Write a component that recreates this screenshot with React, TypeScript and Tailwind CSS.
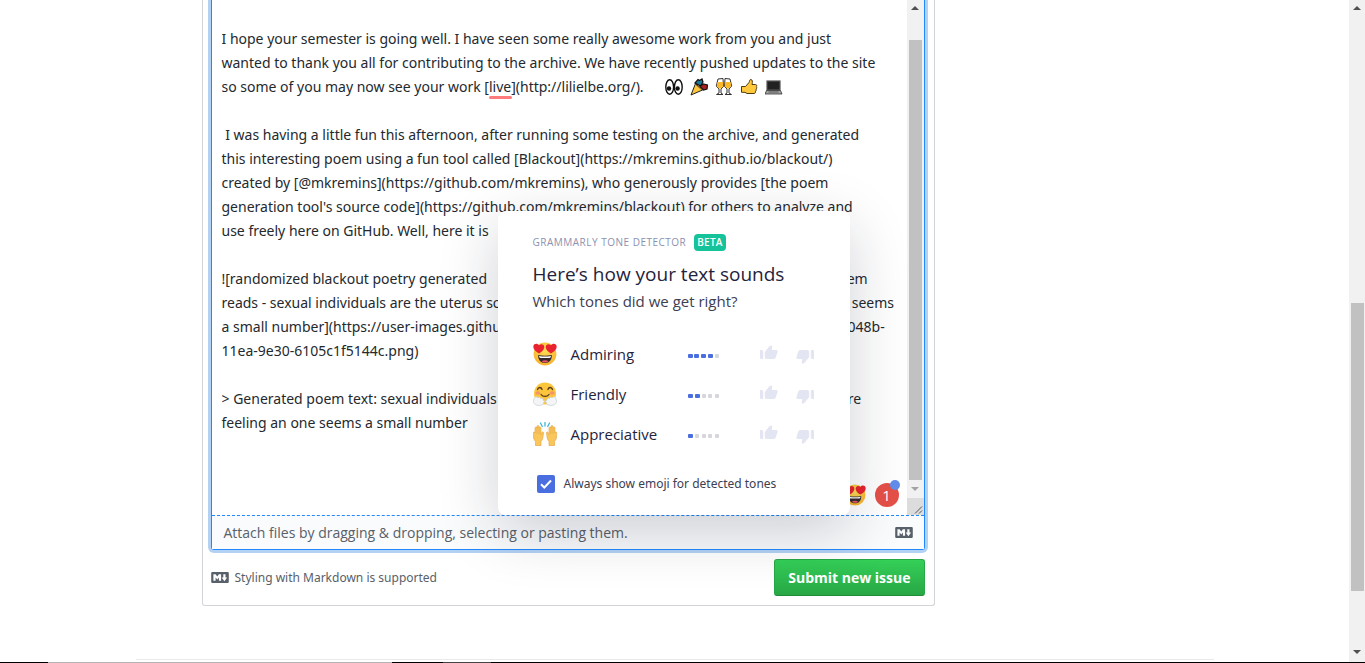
import React from "react";

const issueText = [
  "I hope your semester is going well. I have seen some really awesome work from you and just",
  "wanted to thank you all for contributing to the archive. We have recently pushed updates to the site",
  "so some of you may now see your work [live](http://lilielbe.org/).",
  "",
  " I was having a little fun this afternoon, after running some testing on the archive, and generated",
  "this interesting poem using a fun tool called [Blackout](https://mkremins.github.io/blackout/)",
  "created by [@mkremins](https://github.com/mkremins), who generously provides [the poem",
  "generation tool's source code](https://github.com/mkremins/blackout) for others to analyze and",
  "use freely here on GitHub. Well, here it is",
  "",
  "![randomized blackout poetry generated    from the text of one page held in the archive. The poem",
  "reads - sexual individuals are the uterus so  that there are so many of us who are feeling an one seems",
  "a small number](https://user-images.githubusercontent.com/10261170/69480212-a1b3c48012-048b-",
  "11ea-9e30-6105c1f5144c.png)",
  "",
  "> Generated poem text: sexual individuals are the uterus so  that there are so many of us who are",
  "feeling an one seems a small number",
].join("\n");

function HeartEyes({ className }: { className: string }) {
  return (
    <svg viewBox="0 0 24 24" className={className} aria-hidden="true">
      <defs>
        <radialGradient id="face" cx="50%" cy="35%" r="65%">
          <stop offset="0" stopColor="#fddc55" />
          <stop offset="1" stopColor="#f8b32c" />
        </radialGradient>
      </defs>
      <circle cx="12" cy="12" r="11.4" fill="url(#face)" />
      <path d="M5.2 13c4 .9 9.600.9 13.600 0 .3 4.600-2.400 8-6.800 8s-7.100-3.400-6.800-8z" fill="#33292f" />
      <path d="M6 13.900c3.900.8 8.100.8 12 0-.1 1.200-.7 2-1.700 2H7.700c-1 0-1.600-.8-1.700-2z" fill="#fff" />
      <path d="M8.500 19.300c2-1.500 5-1.500 7 0-2 1.700-5 1.700-7 0z" fill="#ea5562" />
      <path d="M6 11.400C2.600 9.600-.2 7.200.4 4 .9 1.200 4.600.8 6.100 3.300 8.300 1.200 11.700 2.500 11.200 5.600 10.800 8.500 8.500 10.200 6 11.400z" fill="#e8222e" />
      <path d="M18 11.400c3.400-1.800 6.200-4.200 5.600-7.400-.5-2.800-4.200-3.200-5.700-.7-2.200-2.100-5.600-.8-5.100 2.300.4 2.900 2.700 4.600 5.200 5.800z" fill="#e8222e" />
    </svg>
  );
}

function Hugging({ className }: { className: string }) {
  return (
    <svg viewBox="0 0 24 24" className={className} aria-hidden="true">
      <circle cx="12" cy="11.500" r="11" fill="#fbc63c" />
      <ellipse cx="4.800" cy="11" rx="2.500" ry="1.800" fill="#f5946b" />
      <ellipse cx="19.200" cy="11" rx="2.500" ry="1.800" fill="#f5946b" />
      <g fill="none" stroke="#573b20" strokeWidth="1.300" strokeLinecap="round">
        <path d="M4.500 7.500c.7-2.700 3.800-2.700 4.600 0M14.900 7.500c.8-2.700 3.900-2.700 4.600 0M8 12.500c1.800 2.600 6.200 2.600 8 0" />
      </g>
      <g fill="#f3f5f7" stroke="#c5cbd2" strokeWidth=".7">
        <path d="M1.500 16c1-2 3-1 3.300 0 1-1.500 2.800-.8 2.600.4 1.600-.6 3.400.3 2.500 1.700 2 .2 2 2 .6 2.500.4 2.400-3.700 3.300-6.300 2.700C1 22.700-.8 19.500 1.500 16z" />
        <path d="M22.500 16c-1-2-3-1-3.300 0-1-1.500-2.800-.8-2.600.4-1.600-.6-3.400.3-2.500 1.700-2 .2-2 2-.6 2.500-.4 2.400 3.700 3.300 6.300 2.700 3.200-.6 5-3.800 2.700-7.300z" />
      </g>
    </svg>
  );
}

function RaisedHands({ className }: { className: string }) {
  return (
    <svg viewBox="0 0 24 24" className={className} aria-hidden="true">
      <path d="M7.500 1l1.800 3.500M12 0v4M16.500 1l-1.800 3.500" stroke="#3fb6dc" strokeWidth="1.300" fill="none" strokeLinecap="round" />
      <g fill="#f9c65c" stroke="#e49f3d" strokeWidth=".6">
        <path d="M2.500 23.500v-4C.5 17.500.2 15 .3 11c.1-1.500 1.600-1.400 1.700 0V6c.2-1.500 1.900-1.500 2 0V4.500c.2-1.500 1.900-1.500 2 0V6c.3-1.400 1.900-1.300 2 0v6.500c.6-3 2.800-3.200 2.500-1.400-.5 3.400-.4 6.400-2.500 8.400v4z" />
        <path d="M21.500 23.500v-4c2-2 2.300-4.500 2.200-8.500-.1-1.500-1.600-1.400-1.700 0V6c-.2-1.500-1.900-1.500-2 0V4.500c-.2-1.500-1.900-1.500-2 0V6c-.3-1.400-1.900-1.300-2 0v6.500c-.6-3-2.800-3.200-2.500-1.400.5 3.400.4 6.400 2.500 8.400v4z" />
      </g>
      <path d="M4 6v6M6 5.500V12M20 6v6M18 5.500V12" stroke="#e49f3d" strokeWidth=".5" />
    </svg>
  );
}

function MessageEmoji() {
  return (
    <div aria-hidden="true" className="pointer-events-none absolute top-[78px] left-[453px] flex gap-[7px]">
      <svg viewBox="0 0 18 18" className="size-[18px]">
        <g fill="#fff" stroke="#111" strokeWidth="1.400">
          <ellipse cx="4.700" cy="9" rx="3.900" ry="7.200" />
          <ellipse cx="13.300" cy="9" rx="3.900" ry="7.200" />
        </g>
        <circle cx="4" cy="10.500" r="2.200" fill="#111" />
        <circle cx="12.600" cy="10.500" r="2.200" fill="#111" />
      </svg>
      <svg viewBox="0 0 18 18" className="size-[18px]">
        <path d="M5.500 5.500L1 17l11.500-5z" fill="#fdc83f" stroke="#222" strokeWidth="1" />
        <path d="M5 5l3-3.500 1.500 1L12 1l1 3-2.500 4z" fill="#1d7a98" stroke="#111" strokeWidth="1.200" />
        <path d="M10 8.500l3-2.500 4.500 1-.5 4-3.500 1z" fill="#a8221e" stroke="#111" strokeWidth="1.200" />
        <path d="M6 7l6 5" stroke="#a87412" strokeWidth="1" />
      </svg>
      <svg viewBox="0 0 18 18" className="size-[18px]">
        <g fill="#fff" stroke="#333" strokeWidth="1">
          <path d="M3 1l5-.5.500 8L6 11v4l2 1.500H1.500L4 15v-4L1.300 8z" />
          <path d="M15 1l-5-.5-.5 8L12 11v4l-2 1.500h6.500L14 15v-4l2.700-3z" />
        </g>
        <path d="M2.500 4h5.600l.1 4.300L6 10.500H4L1.800 7.800zM15.500 4H9.900l-.1 4.300 2.200 2.200h2l2.200-2.700z" fill="#fbb829" />
      </svg>
      <svg viewBox="0 0 18 18" className="size-[18px]">
        <path d="M1.500 8.500h4l3.500-4c.7-1 .3-3 1.800-3s2 2 1.200 5h3.500c1.500 0 1.500 2 .6 2.300 1 .5.8 2-.2 2.300.7.600.4 1.900-.5 2.100.4.9-.1 2.300-1.400 2.300H7l-2-1.200H1.500z" fill="#ffc83d" stroke="#4b3a14" strokeWidth="1" strokeLinejoin="round" />
      </svg>
      <svg viewBox="0 0 18 18" className="size-[18px]">
        <rect x="2" y="3" width="13" height="9" fill="#222" stroke="#555" strokeWidth="1.200" />
        <path d="M1.500 12.500h14l1.500 3.500H0z" fill="#a5a5a5" stroke="#333" strokeWidth=".8" />
        <path d="M3.500 14h10" stroke="#444" strokeWidth=".8" />
      </svg>
    </div>
  );
}

function Markdown({ className }: { className: string }) {
  return (
    <svg viewBox="0 3 16 10" className={className} fill="#586069" aria-hidden="true">
      <path fillRule="evenodd" d="M14.850 3H1.150C.52 3 0 3.520 0 4.150v7.690C0 12.480.52 13 1.150 13h13.690c.64 0 1.150-.52 1.150-1.150v-7.700C16 3.520 15.480 3 14.850 3zM9 11H7V8L5.500 9.920 4 8v3H2V5h2l1.500 2L7 5h2v6zm2.990.5L9.500 8H11V5h2v3h1.500l-2.510 3.500z" />
    </svg>
  );
}

function Thumb({ className }: { className: string }) {
  return (
    <svg viewBox="0 0 18 15" className={className} fill="#e3e5f2" aria-hidden="true">
      <path d="M0 5h1.500A1.700 1.700 0 0 1 3.200 6.700V14H1.200A1.200 1.200 0 0 1 0 12.800z" />
      <path d="M4.800 7.600C4.800 7 5 6.600 5.400 6.200L9.600 1C10.500-.2 12.500.4 12.200 2.200L11.700 5H16c1.300 0 1.900 1 1.500 2.200l-1.700 5c-.4 1.200-1 1.800-2.300 1.800H7C5.600 14 4.800 13.200 4.800 12z" />
    </svg>
  );
}

function Arrow({ down = false, light = false }: { down?: boolean; light?: boolean }) {
  return (
    <svg viewBox="0 0 8 4" className={down ? "h-1 w-2 rotate-180" : "h-1 w-2"} aria-hidden="true">
      <path d="M4 0L8 4H0z" fill={light ? "#a3a3a3" : "#505050"} />
    </svg>
  );
}

const tones = [
  { name: "Admiring", level: 4, Icon: HeartEyes },
  { name: "Friendly", level: 2, Icon: Hugging },
  { name: "Appreciative", level: 1, Icon: RaisedHands },
];

function ToneDetector() {
  return (
    <section className="absolute bottom-[34px] left-[286px] w-[352px] rounded-lg bg-white px-[35px] pt-[22px] pb-[19px] text-[#1f243c] shadow-[0_16px_60px_rgba(20,24,50,0.2)]">
      <div className="flex items-center gap-2">
        <span className="text-[10px] leading-[18px] tracking-wider text-[#8b91b0]">GRAMMARLY TONE DETECTOR</span>
        <span className="rounded bg-[#15c39a] px-[3px] text-[10px] leading-[17px] font-semibold tracking-wide text-white">BETA</span>
      </div>
      <h2 className="mt-[9px] text-[19px] leading-7 font-medium">Here’s how your text sounds</h2>
      <p className="text-[15px] leading-[26px] text-[#3c4052]">Which tones did we get right?</p>
      <ul className="mt-5 flex flex-col">
        {tones.map(({ name, level, Icon }) => (
          <li key={name} className="flex h-10 items-center">
            <Icon className="size-6 shrink-0" />
            <span className="ml-[14px] w-[117px] text-[15px] leading-6 font-medium">{name}</span>
            <span className="mt-1 flex w-[31px] justify-between" role="img" aria-label={`${level} of 5`}>
              {[1, 2, 3, 4, 5].map((n) => (
                <span key={n} className={n <= level ? "h-1 w-[5px] rounded-[1px] bg-[#4a6ee0]" : "h-1 w-1 rounded-[1px] bg-[#d5d7db]"} />
              ))}
            </span>
            <button type="button" aria-label={`${name} is right`} className="mb-1 ml-[41px]">
              <Thumb className="h-[15px] w-[18px]" />
            </button>
            <button type="button" aria-label={`${name} is wrong`} className="mt-1 ml-[18px]">
              <Thumb className="h-[15px] w-[18px] rotate-180" />
            </button>
          </li>
        ))}
      </ul>
      <label className="mt-[18px] ml-1 flex items-center gap-[9px] font-['Noto_Sans',sans-serif] text-[12px] leading-6 text-[#3c4052]">
        <span className="grid size-[18px] place-items-center">
          <input type="checkbox" defaultChecked className="col-start-1 row-start-1 size-[18px] appearance-none rounded-[2px] bg-[#4a6ee0]" />
          <svg viewBox="0 0 18 18" className="pointer-events-none col-start-1 row-start-1 size-[18px]" aria-hidden="true">
            <path d="M4 9.300l3.300 3.200L14 5.500" fill="none" stroke="#fff" strokeWidth="2" />
          </svg>
        </span>
        Always show emoji for detected tones
      </label>
    </section>
  );
}

export default function App() {
  return (
    <div className="flex h-screen flex-col overflow-hidden bg-white font-['Open_Sans',sans-serif] text-[#24292e]">
      <div className="flex min-h-0 flex-1">
        <main className="min-w-0 flex-1">
          <div className="mx-auto max-w-[1078px]">
            <form className="ml-[66px] max-w-[733px] rounded-b-[3px] border border-t-0 border-[#d1d5da] pr-[9px] pb-[9px] pl-2" onSubmit={(e) => e.preventDefault()}>
              <div className="relative rounded-b-[3px] border border-t-0 border-[#2188ff] shadow-[0_0_0_3px_rgba(3,102,214,0.3)]">
                <div className="relative flex">
                  <textarea
                    aria-label="Issue text"
                    rows={20}
                    wrap="off"
                    spellCheck={false}
                    defaultValue={issueText}
                    className="block min-w-0 flex-1 resize-none overflow-hidden bg-white pt-[27px] pb-2 pl-[10px] font-['Noto_Sans',sans-serif] text-[14px] leading-6 outline-none"
                  />
                  <MessageEmoji />
                  <span className="absolute top-[96px] left-[277px] h-[3px] w-[23px] rounded-sm bg-[#ff7b7b]" />
                  <div className="flex w-[17px] flex-col items-center bg-[#f1f1f1]">
                    <div className="flex h-10 items-start pt-[6px]"><Arrow /></div>
                    <div className="w-[13px] flex-1 bg-[#c1c1c1]" />
                    <div className="flex h-[18px] items-center"><Arrow down light /></div>
                    <svg viewBox="0 0 17 17" className="size-[17px] bg-[#dcdcdc]" aria-hidden="true">
                      <path d="M8 15.500l7-7M12 15.500l3-3" stroke="#555" strokeWidth="1" />
                    </svg>
                  </div>
                  <HeartEyes className="absolute right-[58px] bottom-[9px] size-[22px]" />
                  <button type="button" aria-label="1 writing alert" className="absolute right-[25px] bottom-2 grid size-6 place-items-center rounded-full bg-[#e55048] text-[15px] leading-6 font-medium text-white">
                    1
                    <span className="absolute -top-[3px] -right-[1px] size-[10px] rounded-full bg-[#628eec]" />
                  </button>
                </div>
                <label className="flex h-[34px] items-center justify-between border-t border-dashed border-[#2188ff] bg-[#fafbfc] pr-[11px] pl-3 text-[14px] text-[#586069]">
                  Attach files by dragging &amp; dropping, selecting or pasting them.
                  <input type="file" className="sr-only" />
                  <Markdown className="h-[11px] w-[18px]" />
                </label>
                <ToneDetector />
              </div>
              <div className="flex items-center justify-between pt-[9px]">
                <a href="#markdown" className="flex items-center gap-[6px] font-['Noto_Sans',sans-serif] text-[12px] text-[#586069]">
                  <Markdown className="h-[11px] w-[18px]" />
                  Styling with Markdown is supported
                </a>
                <button type="submit" className="h-[37px] rounded-[3px] border border-[#28a745] border-b-[#1f8a38] bg-linear-to-b from-[#34d058] to-[#28a745] px-[13px] text-[14px] font-bold text-white">
                  Submit new issue
                </button>
              </div>
            </form>
            <hr className="mt-[53px] border-[#e8eaec]" />
          </div>
        </main>
        <div className="flex w-4 flex-col items-center bg-[#f1f1f1]" aria-hidden="true">
          <div className="flex h-[303px] items-start pt-[6px]"><Arrow /></div>
          <div className="h-[288px] w-[13px] bg-[#c1c1c1]" />
          <div className="mt-auto pb-2"><Arrow down /></div>
        </div>
      </div>
      <div className="flex h-px bg-black" aria-hidden="true">
        <span className="ml-12 w-[344px] bg-[#b4b4b4]" />
        <span className="ml-[51px] w-12 bg-[#444444]" />
      </div>
    </div>
  );
}
